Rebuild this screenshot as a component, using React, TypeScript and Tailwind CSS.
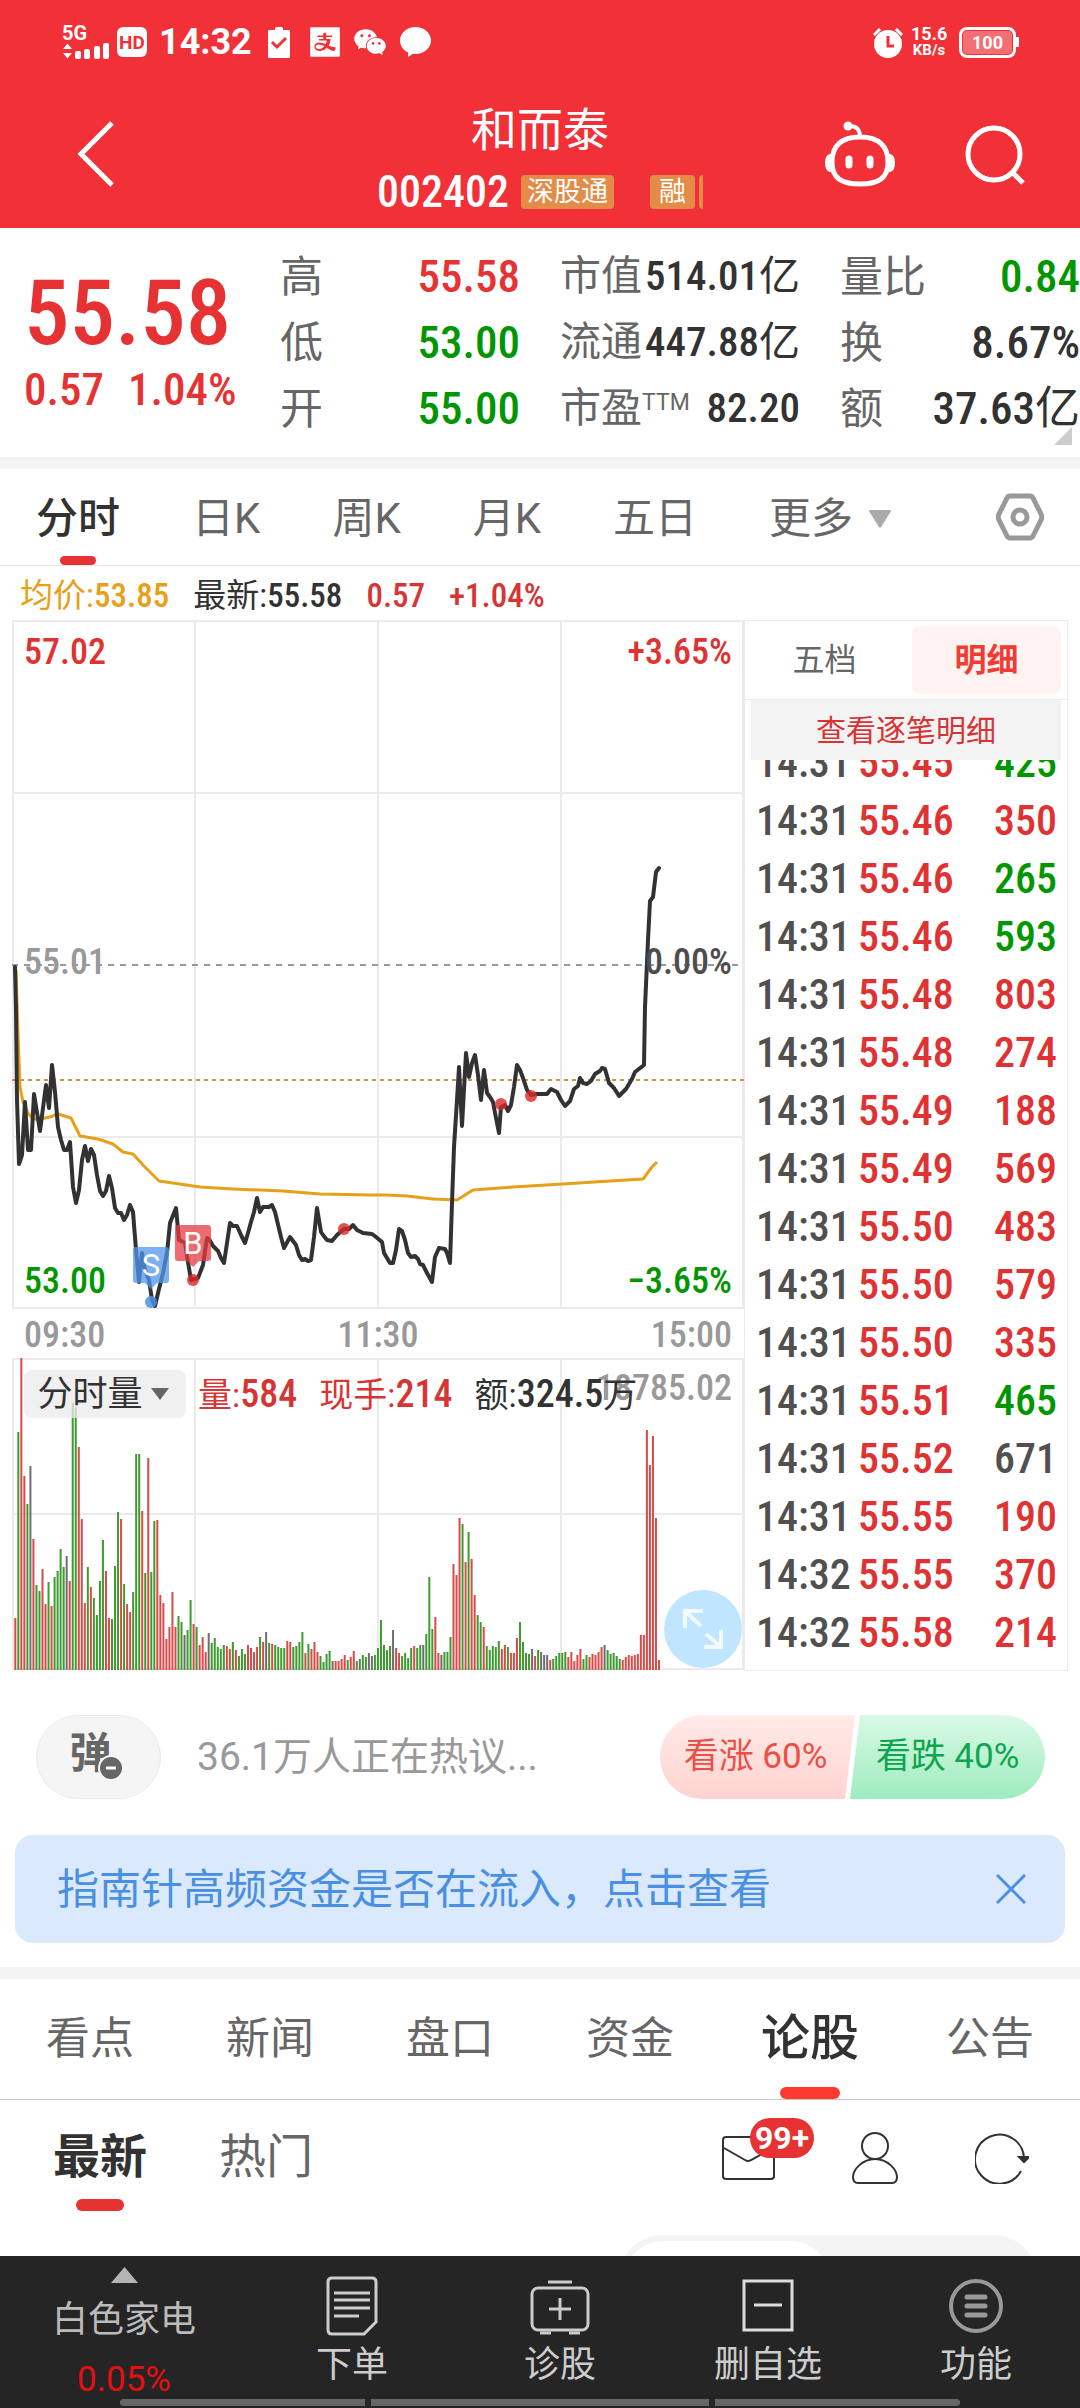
import React, { useState } from 'react'
import { clsx } from 'clsx'
import { AiFillAlipaySquare, AiFillWechat } from 'react-icons/ai'

const quoteColumns = [
  {
    labelSize: 'text-[43px]',
    valueSize: 'text-[45px]',
    rows: [
      { label: '高', value: '55.58', color: 'text-[#e63232]' },
      { label: '低', value: '53.00', color: 'text-[#009600]' },
      { label: '开', value: '55.00', color: 'text-[#009600]' },
    ],
  },
  {
    labelSize: 'text-[41px]',
    valueSize: 'text-[41px]',
    rows: [
      { label: '市值', value: '514.01', unit: '亿', color: 'text-[#323232]' },
      { label: '流通', value: '447.88', unit: '亿', color: 'text-[#323232]' },
      { label: '市盈', sup: 'TTM', value: '82.20', color: 'text-[#323232]' },
    ],
  },
  {
    labelSize: 'text-[43px]',
    valueSize: 'text-[45px]',
    rows: [
      { label: '量比', value: '0.84', color: 'text-[#009600]' },
      { label: '换', value: '8.67%', color: 'text-[#323232]' },
      { label: '额', value: '37.63', unit: '亿', color: 'text-[#323232]' },
    ],
  },
]

const periods = ['分时', '日K', '周K', '月K', '五日']

const trades = [
  ['14:31', '55.45', '425', 'down'],
  ['14:31', '55.46', '350', 'up'],
  ['14:31', '55.46', '265', 'down'],
  ['14:31', '55.46', '593', 'down'],
  ['14:31', '55.48', '803', 'up'],
  ['14:31', '55.48', '274', 'up'],
  ['14:31', '55.49', '188', 'up'],
  ['14:31', '55.49', '569', 'up'],
  ['14:31', '55.50', '483', 'up'],
  ['14:31', '55.50', '579', 'up'],
  ['14:31', '55.50', '335', 'up'],
  ['14:31', '55.51', '465', 'down'],
  ['14:31', '55.52', '671', 'flat'],
  ['14:31', '55.55', '190', 'up'],
  ['14:32', '55.55', '370', 'up'],
  ['14:32', '55.58', '214', 'up'],
]

const sections = ['看点', '新闻', '盘口', '资金', '论股', '公告']

const pricePoints =
  '3,347 4,390 5,480 7,544 10,535 13,482 16,530 19,530 22,474 28,511 34,465 37,488 40,445 43,472 46,507 49,520 52,530 55,530 58,522 61,567 64,583 67,570 70,540 73,526 76,541 79,529 82,535 85,555 88,571 91,576 94,571 97,556 100,568 103,588 106,593 109,593 112,600 115,595 118,585 121,592 124,630 127,662 130,633 133,650 137,660 140,680 143,686 146,673 151,653 155,633 158,603 164,588 167,620 173,623 176,642 179,660 186,658 191,645 195,618 197,619 201,626 206,631 209,638 212,643 215,623 218,603 221,606 225,606 229,615 233,623 236,613 239,602 242,592 245,578 248,592 251,587 257,587 260,585 263,592 269,617 272,628 278,617 284,625 287,635 290,640 293,639 296,641 299,640 302,617 305,588 309,612 311,615 315,620 320,621 325,615 332,609 337,609 341,605 345,610 351,613 360,614 364,617 370,622 372,633 378,643 381,643 384,630 387,609 390,611 393,620 396,633 399,637 403,636 406,639 408,644 411,645 415,653 420,662 423,637 427,628 433,629 435,633 438,643 440,583 442,527 445,480 447,447 450,506 454,433 457,457 460,443 463,435 466,455 469,480 472,450 475,473 478,477 481,482 484,498 487,513 489,487 493,485 496,491 499,485 502,467 505,445 508,450 511,458 515,470 519,475 525,474 535,474 539,469 545,472 549,480 553,486 558,481 562,469 566,466 568,458 571,463 575,464 579,461 583,454 588,451 590,448 593,449 597,463 602,468 607,476 614,469 620,459 623,452 632,445 633,387 636,320 638,281 641,277 644,252 647,248'

const averagePoints =
  '4,350 6,413 8,467 11,482 16,493 21,499 28,499 38,497 46,494 59,498 68,516 86,519 101,524 111,532 121,534 131,545 147,561 161,563 188,567 221,569 271,571 308,574 358,575 375,575 395,576 421,579 445,580 461,570 501,567 551,564 598,561 631,559 640,547 645,542'

// One entry per minute: r = up, g = down, k = flat, then the bar height
const volumes =
  'r52 g238 r312 r194 g166 k204 r131 g85 g79 r101 r66 g88 r64 g93 g99 g121 g103 k114 r89 g267 g263 r223 r151 r67 g103 r83 g72 g55 g89 g130 r99 r52 g51 g104 g158 r151 g86 r66 r58 g78 g216 g216 r159 g97 r212 g98 g149 r150 r75 r67 r31 r43 r78 r43 g54 g48 k35 g40 g70 r46 g43 r25 r33 r18 k37 g27 g32 g23 g21 g25 r24 r21 g28 r20 g14 g21 g16 r25 r22 r18 r23 g33 r28 k38 g27 r26 g25 g23 g22 g22 r29 r28 g23 g24 g28 g38 r17 g26 r21 r28 r18 g14 g8 g16 g19 k9 r9 r9 r11 r15 g10 r13 r19 g9 k11 g15 g13 k17 k14 g15 g22 g50 g25 g20 g24 k40 r22 r17 g14 g17 g12 g22 r24 g22 g25 k25 g36 g93 g41 r53 r17 k15 g18 g18 g33 r106 r95 r152 g146 r108 g138 r111 r75 g55 g48 r43 g24 g20 g24 g23 g29 r21 r25 g23 r17 r17 r32 g48 g28 g17 g16 k21 r14 g20 k18 k15 k15 r10 g11 g14 g17 g17 g18 r13 r18 r9 r15 r21 g11 g15 r13 r16 r15 r18 r23 k25 g20 g16 g17 g14 g11 r10 r13 r15 r14 r15 r16 r35 r35 r240 r205 r234 r152 r10'.split(' ')

const barColors: Record<string, string> = { r: '#d94a4a', g: '#3f9a30', k: '#6e6e72' }

const Figure: React.FC<{ className?: string; children: React.ReactNode }> = ({ className, children }) => (
  <span className={clsx("font-['Roboto_Condensed',Roboto,sans-serif] font-medium", className)}>{children}</span>
)

const StatusBar: React.FC = () => (
  <div className="flex h-[84px] items-center justify-between pr-[61px] pl-[62px]">
    <div className="flex items-center">
      <div className="w-12">
        <p className="text-[20px] leading-[17px] font-bold">5G</p>
        <svg className="h-[18px] w-12" viewBox="0 0 48 18" fill="currentColor">
          <path d="M1 7L5.500 1.500 10 7zM1 11L5.500 16.500 10 11z" />
          <rect x="13" y="9" width="6" height="8" rx="2" />
          <rect x="22" y="7" width="6" height="10" rx="2" />
          <rect x="32" y="4" width="6" height="13" rx="2" />
          <rect x="41" y="1" width="6" height="16" rx="2" />
        </svg>
      </div>
      <span className="ml-[7px] flex size-[30px] items-center justify-center rounded-md bg-white text-[19px] leading-none font-bold text-[#f13038]">
        HD
      </span>
      <span className="ml-3 text-4xl leading-none font-bold">14:32</span>
      <svg className="ml-4 h-[31px] w-[22px]" viewBox="0 0 22 31">
        <path d="M1 3h6V1.500Q7 0 8.500 0h5Q15 0 15 1.500V3h6q1 0 1 1v26q0 1-1 1H1q-1 0-1-1V4q0-1 1-1z" fill="#fff" />
        <path d="M4 15l5 5 9-9" fill="none" stroke="#f13038" strokeWidth="3" />
      </svg>
      <AiFillAlipaySquare className="ml-4 size-[38px]" />
      <AiFillWechat className="ml-2 size-[36px]" />
      <svg className="ml-3 size-[31px]" viewBox="0 0 31 31" fill="currentColor">
        <path d="M15.500 0C24 0 31 6 31 13.500S24 27 15.500 27q-1.500 0-2.500-.3L8 30V25.500C3 23 0 18.500 0 13.500 0 6 7 0 15.500 0z" />
      </svg>
    </div>

    <div className="flex items-center">
      <svg className="h-[31px] w-[30px]" viewBox="0 0 30 31">
        <circle cx="15" cy="17" r="14" fill="#fff" />
        <path d="M1 8l6-6M29 8l-6-6" stroke="#fff" strokeWidth="3" />
        <path d="M15 9v10h6" fill="none" stroke="#f13038" strokeWidth="3" />
      </svg>
      <div className="ml-2 w-9 text-center font-bold">
        <p className="text-lg leading-[16px]">15.6</p>
        <p className="text-[15px] leading-[16px]">KB/s</p>
      </div>
      <div className="ml-3 flex h-[31px] w-[57px] rounded-lg border-3 border-white p-px">
        <span className="flex-1 rounded bg-white/30 text-center text-lg leading-[24px] font-bold">100</span>
      </div>
      <span className="h-[10px] w-[3px] bg-white" />
    </div>
  </div>
)

const Header: React.FC = () => (
  <header className="bg-[#f13038] text-white">
    <StatusBar />
    <div className="grid h-[144px] grid-cols-3 px-[54px]">
      <button aria-label="返回" className="h-[140px] w-[61px] pl-[23px]">
        <svg className="h-[68px] w-[38px]" viewBox="0 0 38 68" fill="none" stroke="currentColor" strokeWidth="5">
          <path d="M35 3L4 34l31 31" />
        </svg>
      </button>
      <div className="-mx-8 text-center">
        <h1 className="pt-3 text-[46px] leading-[68px]">和而泰</h1>
        <div className="flex items-center justify-center gap-1 pt-[10px]">
          <Figure className="text-[44px] leading-9">002402</Figure>
          <span className="ml-2 rounded bg-[#e48b48] px-[6px] text-[27px] leading-[34px] whitespace-nowrap">深股通</span>
          <span className="ml-8 rounded bg-[#e48b48] px-[9px] text-[27px] leading-[34px]">融</span>
          <span className="h-[34px] w-1 rounded-l bg-[#e48b48]" />
        </div>
      </div>
      <div className="flex items-center justify-end gap-[69px] pb-1">
        <button aria-label="智能助手">
          <svg className="h-[66px] w-[72px]" viewBox="0 0 72 66" fill="none" stroke="currentColor" strokeWidth="5">
            <path d="M36 16C55 16 64 25 64 41S55 63 36 63 8 57 8 41 17 16 36 16z" />
            <path d="M24 5q12-1 12 11" strokeWidth="4" />
            <circle cx="24" cy="5" r="4.500" fill="currentColor" stroke="none" />
            <path d="M25 38v6M46 38v6" strokeWidth="7" strokeLinecap="round" />
            <path d="M6 34q-4 1-4 8t4 8zM66 34q4 1 4 8t-4 8z" fill="currentColor" strokeWidth="2" />
          </svg>
        </button>
        <button aria-label="搜索">
          <svg className="size-[61px]" viewBox="0 0 61 61" fill="none" stroke="currentColor" strokeWidth="5">
            <circle cx="29" cy="30" r="26" />
            <path d="M47 48l11 11" />
          </svg>
        </button>
      </div>
    </div>
  </header>
)

const Quote: React.FC = () => (
  <section className="relative grid h-[229px] grid-cols-[9fr_10fr_10fr_10fr] gap-10 pt-4 pl-6 whitespace-nowrap">
    <div className="text-[#e63232]">
      <p className="pt-6">
        <Figure className="block text-[91px] leading-[90px]">55.58</Figure>
      </p>
      <p className="flex gap-6 pt-3 text-[45px] leading-10">
        <Figure>0.57</Figure>
        <Figure>1.04%</Figure>
      </p>
    </div>
    {quoteColumns.map((column, i) => (
      <dl key={i}>
        {column.rows.map((row) => (
          <div key={row.label} className="flex h-[66px] items-center justify-between">
            <dt className={clsx('flex text-[#666]', column.labelSize)}>
              {row.label}
              {row.sup && <sup className="top-0 text-[23px] leading-[50px]">{row.sup}</sup>}
            </dt>
            <dd className={clsx(row.color, column.valueSize)}>
              <Figure>{row.value}</Figure>
              {row.unit}
            </dd>
          </div>
        ))}
      </dl>
    ))}
    <svg className="absolute right-2 bottom-3 size-[18px]" viewBox="0 0 18 18">
      <path d="M18 0v18H0z" fill="#ccc" />
    </svg>
  </section>
)

const PeriodTabs: React.FC = () => {
  const [period, setPeriod] = useState('分时')

  return (
    <nav className="flex h-[97px] items-stretch gap-[72px] border-b border-[#e6e6e6] pr-9 pl-9 text-[42px] whitespace-nowrap">
      {periods.map((item) => (
        <button
          key={item}
          onClick={() => setPeriod(item)}
          className={clsx('relative pt-[3px]', item === period ? 'font-medium text-[#323232]' : 'text-[#666]')}
        >
          {item}
          {item === period && (
            <span className="absolute bottom-0 left-1/2 h-[9px] w-9 -translate-x-1/2 rounded-full bg-[#e63232]" />
          )}
        </button>
      ))}
      <button className="flex items-center gap-4 pt-[3px] text-[#666]">
        更多
        <svg className="h-[18px] w-[22px]" viewBox="0 0 22 18">
          <path d="M1 0h20q1.500 0 .5 2L12 17q-1 1.500-2 0L.5 2Q-.5 0 1 0z" fill="#aaa" />
        </svg>
      </button>
      <button aria-label="设置" className="ml-auto">
        <svg className="size-12" viewBox="0 0 48 48" fill="none" stroke="#999" strokeWidth="5">
          <path d="M14 3h20q2 0 3 2l8 16q1.500 3 0 6l-8 16q-1 2-3 2H14q-2 0-3-2L3 27q-1.500-3 0-6l8-16q1-2 3-2z" />
          <circle cx="24" cy="24" r="7" />
        </svg>
      </button>
    </nav>
  )
}

const Marker: React.FC<{ x: number; y: number; letter: string; fill: string }> = ({ x, y, letter, fill }) => (
  <g transform={`translate(${x} ${y})`}>
    <path d="M3 0h30q3 0 3 3v30q0 3-3 3H24l-6 6-6-6H3q-3 0-3-3V3q0-3 3-3z" fill={fill} opacity="0.75" />
    <text x="18" y="29" fill="#fff" fontSize="31" fontWeight="400" textAnchor="middle">
      {letter}
    </text>
  </g>
)

const PriceChart: React.FC = () => (
  <div className="relative h-[689px] text-[36px] leading-9">
    <svg className="block h-full w-full" viewBox="0 0 732 689" preserveAspectRatio="none" fill="none">
      <path d="M1 1h730v687H1zM183 1v687M366 1v687M549 1v687M1 173h730M1 517h730" stroke="#ebebeb" strokeWidth="2" />
      <path d="M0 345h732" stroke="#999" strokeWidth="2" strokeDasharray="6 6" />
      <path d="M0 460h732" stroke="#c8964b" strokeWidth="2" strokeDasharray="4 4" />
      <polyline points={averagePoints} stroke="#e6a019" strokeWidth="3" strokeLinejoin="round" />
      <polyline points={pricePoints} stroke="#323232" strokeWidth="4" strokeLinejoin="round" strokeLinecap="round" />
      <g fill="#dc2828" opacity="0.8">
        <circle cx="181" cy="660" r="6" />
        <circle cx="332" cy="609" r="6" />
        <circle cx="489" cy="484" r="6" />
        <circle cx="519" cy="476" r="6" />
      </g>
      <circle cx="139" cy="682" r="6" fill="#4a90e6" opacity="0.85" />
      <Marker x={121} y={627} letter="S" fill="#5096eb" />
      <Marker x={163} y={605} letter="B" fill="#e63c41" />
    </svg>
    <Figure className="absolute top-[14px] left-3 text-[#e03232]">57.02</Figure>
    <Figure className="absolute top-[14px] right-3 text-[#e03232]">+3.65%</Figure>
    <Figure className="absolute top-[324px] left-3 text-[#999]">55.01</Figure>
    <Figure className="absolute top-[324px] right-3 text-[#4d4d4d]">0.00%</Figure>
    <Figure className="absolute bottom-[10px] left-3 text-[#009600]">53.00</Figure>
    <Figure className="absolute right-3 bottom-[10px] text-[#009600]">−3.65%</Figure>
  </div>
)

const VolumeChart: React.FC = () => (
  <div className="relative h-[312px] whitespace-nowrap">
    <svg className="block h-full w-full" viewBox="0 0 732 312" preserveAspectRatio="none">
      <path d="M1 1h730v310H1zM183 1v310M366 1v310M549 1v310M1 156h730" fill="none" stroke="#ebebeb" strokeWidth="2" />
      {volumes.map((v, i) => {
        const height = Number(v.slice(1))
        return <rect key={i} x={2.3 + i * 3.022} y={312 - height} width="2" height={height} fill={barColors[v[0]]} />
      })}
    </svg>
    <Figure className="absolute top-3 right-3 text-[36px] leading-9 text-[#999]">18785.02</Figure>
    <div className="absolute top-3 left-3 flex h-12 items-center text-[34px] leading-none">
      <button className="flex h-12 w-[162px] items-center justify-center gap-2 rounded-lg bg-[#ebebeb]/75 pr-1 text-[35px] text-[#323232]">
        分时量
        <svg className="h-3 w-[18px]" viewBox="0 0 18 12">
          <path d="M0 0h18L9 12z" fill="#666" />
        </svg>
      </button>
      <p className="ml-3 flex gap-[22px] text-[#d73535]">
        <span>量:<Figure className="text-[38px]">584</Figure></span>
        <span>现手:<Figure className="text-[38px]">214</Figure></span>
        <span className="text-[#323232]">额:<Figure className="text-[38px]">324.5</Figure>万</span>
      </p>
    </div>
    <button
      aria-label="展开"
      className="absolute right-[2px] bottom-[2px] flex size-[78px] items-center justify-center rounded-full bg-[#bfe5ff]"
    >
      <svg className="size-10" viewBox="0 0 40 40" fill="none" stroke="#f0faff" strokeWidth="4">
        <path d="M2 19V2h18M3 3l15 14M38 21v17H21M37 37L23 25" />
      </svg>
    </button>
  </div>
)

const TradePanel: React.FC = () => (
  <aside className="w-[324px] border border-[#ebebeb]">
    <div className="flex h-[79px] items-center border-b border-[#ebebeb] pr-[6px] text-[32px]">
      <button className="h-[68px] flex-1 pr-2 text-[#666]">五档</button>
      <button className="h-[68px] w-[149px] rounded-lg bg-[#fff3f2] font-bold text-[#f03c32]">明细</button>
    </div>
    <button className="mx-[6px] block h-[60px] w-[310px] bg-[#f3f3f3] text-[30px] text-[#d73535]">查看逐笔明细</button>
    <div className="flex h-[910px] flex-col justify-end overflow-hidden pr-[10px] pb-2 pl-[11px]">
      <table className="w-full font-['Roboto_Condensed',Roboto,sans-serif] text-[42px] font-medium">
        <tbody>
          {trades.map(([time, price, count, side], i) => (
            <tr key={i} className="h-[58px]">
              <td className="w-[102px] p-0 leading-none text-[#505050]">{time}</td>
              <td className="p-0 leading-none text-[#e03232]">{price}</td>
              <td
                className={clsx(
                  'p-0 text-right leading-none',
                  side === 'up' && 'text-[#e03232]',
                  side === 'down' && 'text-[#009600]',
                  side === 'flat' && 'text-[#505050]'
                )}
              >
                {count}
              </td>
            </tr>
          ))}
        </tbody>
      </table>
    </div>
  </aside>
)

const Market: React.FC = () => (
  <section>
    <p className="flex h-[54px] items-center gap-6 pt-1 pl-5 text-[33px] leading-none">
      <span className="text-[#e6a019]">均价:<Figure>53.85</Figure></span>
      <span className="text-[#323232]">最新:<Figure>55.58</Figure></span>
      <Figure className="text-[#d73535]">0.57</Figure>
      <Figure className="text-[#d73535]">+1.04%</Figure>
    </p>
    <div className="flex px-3">
      <div className="min-w-0 flex-1">
        <PriceChart />
        <div className="flex h-[49px] items-center justify-between px-3 pt-[2px] text-[36px] text-[#999]">
          <Figure>09:30</Figure>
          <Figure>11:30</Figure>
          <Figure>15:00</Figure>
        </div>
        <VolumeChart />
      </div>
      <TradePanel />
    </div>
  </section>
)

const Sentiment: React.FC = () => (
  <section className="flex items-center pt-11 pr-[35px] pb-9 pl-9 whitespace-nowrap">
    <button className="relative h-[84px] w-[125px] rounded-full border border-[#ebebeb] bg-[#f5f5f5] pr-4 pb-2 text-[42px] font-bold text-[#666]">
      弹
      <svg className="absolute right-9 bottom-[17px] size-[26px]" viewBox="0 0 26 26">
        <circle cx="13" cy="13" r="12" fill="#666" stroke="#f5f5f5" strokeWidth="2" />
        <path d="M8 13h10" stroke="#fff" strokeWidth="3" />
      </svg>
    </button>
    <button className="ml-9 text-[39px] text-[#999]">36.1万人正在热议...</button>
    <div className="ml-auto flex text-[35px]">
      <button className="h-[84px] w-[195px] rounded-l-full bg-linear-to-b from-[#ffebe9] to-[#ffd3cf] pr-1 text-[#eb5046] [clip-path:polygon(0_0,100%_0,calc(100%-10px)_100%,0_100%)]">
        看涨 60%
      </button>
      <button className="-ml-[5px] h-[84px] w-[195px] rounded-r-full bg-linear-to-b from-[#d9f9e7] to-[#9decbe] text-[#0fa550] [clip-path:polygon(10px_0,100%_0,100%_100%,0_100%)]">
        看跌 40%
      </button>
    </div>
  </section>
)

const Notice: React.FC = () => (
  <div className="mx-[15px] mb-6 flex h-[108px] items-center justify-between rounded-[18px] bg-[#dae9fb] pr-[39px] pl-[42px] text-[#4a90e2]">
    <a href="#" className="text-[42px]">指南针高频资金是否在流入，点击查看</a>
    <button aria-label="关闭">
      <svg className="size-[30px]" viewBox="0 0 30 30" fill="none" stroke="currentColor" strokeWidth="3">
        <path d="M1 1l28 28M29 1L1 29" />
      </svg>
    </button>
  </div>
)

const Discussion: React.FC = () => {
  const [section, setSection] = useState('论股')

  return (
    <section>
      <nav className="grid h-[121px] grid-cols-6 border-b border-[#c8c8c8]">
        {sections.map((item) => (
          <button
            key={item}
            onClick={() => setSection(item)}
            className={clsx(
              'relative',
              item === section ? 'text-[49px] font-medium text-[#323232]' : 'text-[44px] text-[#666]'
            )}
          >
            {item}
            {item === section && (
              <span className="absolute bottom-0 left-1/2 h-3 w-[60px] -translate-x-1/2 rounded-full bg-[#fc3b30]" />
            )}
          </button>
        ))}
      </nav>
      <div className="flex h-[111px] items-stretch pr-[51px] pl-[53px] text-[47px]">
        <button className="relative pt-1 font-bold text-[#323232]">
          最新
          <span className="absolute bottom-0 left-1/2 h-3 w-12 -translate-x-1/2 rounded-full bg-[#e63232]" />
        </button>
        <button className="ml-[72px] pt-1 text-[#666]">热门</button>
        <div className="ml-auto flex items-center gap-[77px] pt-[5px]">
          <button aria-label="消息" className="relative">
            <svg className="h-11 w-[53px]" viewBox="0 0 53 44" fill="none" stroke="#323232" strokeWidth="2">
              <rect x="1" y="1" width="51" height="42" rx="3" />
              <path d="M2 12l21 12q3 2 6 0l22-12" />
            </svg>
            <span className="absolute -top-[18px] left-7 h-10 w-16 rounded-full bg-[#e63232] text-center text-[32px] leading-10 font-bold text-white">
              99+
            </span>
          </button>
          <button aria-label="我的">
            <svg className="h-[52px] w-[46px]" viewBox="0 0 46 52" fill="none" stroke="#323232" strokeWidth="2">
              <circle cx="23" cy="14" r="13" />
              <path d="M23 27C10 27 1 38 1 45q0 6 5 6h34q5 0 5-6C45 38 36 27 23 27z" />
            </svg>
          </button>
          <button aria-label="刷新">
            <svg className="h-[52px] w-[54px]" viewBox="0 0 54 52" fill="none" stroke="#323232" strokeWidth="2">
              <path d="M46 39A24.500 24.500 0 1 1 49 26" />
              <path d="M44 25h10l-5 5z" fill="#323232" />
            </svg>
          </button>
        </div>
      </div>
      <div className="mt-6 flex h-[21px] items-start justify-end overflow-hidden pr-11">
        <div className="h-[84px] w-[416px] shrink-0 rounded-full bg-[#f4f4f4] p-[6px]">
          <div className="h-full w-1/2 rounded-full bg-white" />
        </div>
      </div>
    </section>
  )
}

const toolItem = 'flex flex-col items-center gap-1 pt-5 text-[36px] leading-[50px] text-[#ccc]'

const Toolbar: React.FC = () => (
  <footer className="bg-[#252525]">
    <div className="grid h-[143px] grid-cols-[248fr_208fr_208fr_208fr_208fr] whitespace-nowrap">
      <button className="flex flex-col items-center pt-[11px] text-[36px] text-[#bbb]">
        <svg className="h-4 w-[27px]" viewBox="0 0 27 16">
          <path d="M13.500 0L27 16H0z" fill="#b4b4b4" />
        </svg>
        <span className="mt-3 leading-[50px]">白色家电</span>
        <span className="mt-[15px] text-[35px] leading-10 text-[#e60f0f]">0.05%</span>
      </button>
      <button className={toolItem}>
        <svg className="h-[60px] w-[52px]" viewBox="0 0 52 60" fill="none" stroke="#ccc" strokeWidth="3">
          <path d="M6 2h40q4 0 4 4v40L38 58H6q-4 0-4-4V6q0-4 4-4z" />
          <path d="M8 17h36M8 24h36M8 32h36M8 40h25" />
        </svg>
        下单
      </button>
      <button className={toolItem}>
        <svg className="size-[60px]" viewBox="0 0 60 60" fill="none" stroke="#ccc" strokeWidth="3">
          <rect x="2" y="12" width="56" height="42" rx="6" />
          <path d="M18 6h24M30 22v22M19 33h22M10 57h11M39 57h11" />
        </svg>
        诊股
      </button>
      <button className={toolItem}>
        <svg className="h-[60px] w-[52px]" viewBox="0 0 52 60" fill="none" stroke="#ddd" strokeWidth="3">
          <path d="M2 5h48v49H2zM12 29h28" />
        </svg>
        删自选
      </button>
      <button className={toolItem}>
        <svg className="h-[60px] w-[54px]" viewBox="0 0 54 60" fill="none" stroke="#999" strokeWidth="4">
          <circle cx="27" cy="30" r="25" />
          <path d="M18 21h18M18 30h18M18 39h18" strokeWidth="5" strokeLinecap="round" />
        </svg>
        功能
      </button>
    </div>
    <div className="mx-[120px] flex gap-[6px] pb-[3px]">
      <span className="h-[7px] flex-[245] rounded-l-full bg-[#666]" />
      <span className="h-[7px] flex-[338] bg-[#666]" />
      <span className="h-[7px] flex-[245] rounded-r-full bg-[#666]" />
    </div>
  </footer>
)

export default function App() {
  return (
    <main className="min-h-screen bg-white font-[Roboto,'Noto_Sans_CJK_SC',sans-serif]">
      <Header />
      <Quote />
      <div className="h-3 bg-[#f4f4f4]" />
      <PeriodTabs />
      <Market />
      <Sentiment />
      <Notice />
      <div className="h-3 bg-[#f4f4f4]" />
      <Discussion />
      <Toolbar />
    </main>
  )
}
